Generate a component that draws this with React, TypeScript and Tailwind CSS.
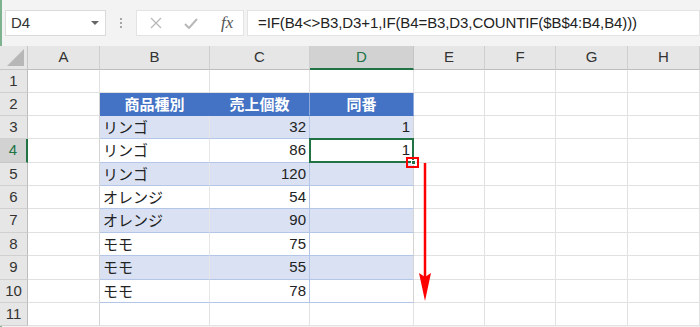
import React from "react";

const cols = ["A", "B", "C", "D", "E", "F", "G", "H"];
const colW = [72, 110, 100, 104, 71, 71, 72, 72];
const rowH = [23, 23, 23, 24, 23, 23, 24, 23, 24, 23, 23];

const data: Record<number, [string, string, string]> = {
  3: ["リンゴ", "32", "1"],
  4: ["リンゴ", "86", "1"],
  5: ["リンゴ", "120", ""],
  6: ["オレンジ", "54", ""],
  7: ["オレンジ", "90", ""],
  8: ["モモ", "75", ""],
  9: ["モモ", "55", ""],
  10: ["モモ", "78", ""],
};

const jp = { fontFamily: '"Noto Sans CJK JP", "Noto Sans", sans-serif' };
const lat = { fontFamily: '"Liberation Sans", Arial, sans-serif' };

export default function App() {
  const gridCols = `28px ${colW.map((w) => w + "px").join(" ")}`;
  const gridRows = `24px ${rowH.map((h) => h + "px").join(" ")}`;

  const cells: React.ReactNode[] = [];
  cells.push(
    <div key="corner" className="relative bg-[#e6e6e6] border-r border-b border-[#c6c6c6]">
      <div
        className="absolute right-[3px] bottom-[3px] w-0 h-0"
        style={{ borderLeft: "17px solid transparent", borderBottom: "17px solid #b7b7b7" }}
      />
    </div>
  );
  cols.forEach((c) => {
    const sel = c === "D";
    cells.push(
      <div
        key={"h" + c}
        className={
          "flex items-center justify-center text-[15px] border-r " +
          (sel
            ? "bg-[#d2d2d2] text-[#217346] border-[#c6c6c6] border-b-2 border-b-[#217346]"
            : "bg-[#e6e6e6] text-[#333] border-[#cfcfcf] border-b border-b-[#bdbdbd]")
        }
        style={lat}
      >
        {c}
      </div>
    );
  });

  for (let r = 1; r <= 11; r++) {
    const sel = r === 4;
    cells.push(
      <div
        key={"r" + r}
        className={
          "flex items-center justify-center text-[15px] border-b " +
          (sel
            ? "bg-[#d2d2d2] text-[#217346] border-[#c6c6c6] border-r-2 border-r-[#217346]"
            : "bg-[#e6e6e6] text-[#333] border-[#d0d0d0] border-r border-r-[#bdbdbd]")
        }
        style={lat}
      >
        {r}
      </div>
    );
    cols.forEach((c, ci) => {
      const inTable = ci >= 1 && ci <= 3 && r >= 2 && r <= 10;
      let cls = "flex items-center text-[15px] px-[3px] ";
      let content: React.ReactNode = null;
      let font: React.CSSProperties = lat;
      if (inTable) {
        if (r === 2) {
          cls += "bg-[#4472c4] text-white font-bold justify-center border-b border-[#4472c4] ";
          cls += ci >= 2 ? "border-r border-r-[#8eaadb] " : "border-r border-r-[#4472c4] ";
          content = ["商品種別", "売上個数", "同番"][ci - 1];
          font = jp;
        } else {
          const band = r % 2 === 1;
          cls += (band ? "bg-[#d9e1f2] " : "bg-white ") + "text-[#222] border-b border-[#b4c6e7] ";
          cls += ci === 2 ? "border-r border-r-[#b4c6e7] " : ci === 3 ? "border-r border-r-[#d4d4d4] " : "border-r border-r-[#e6e6e6] ";
          content = data[r][ci - 1];
          if (ci === 1) {
            font = jp;
            cls += "justify-start ";
          } else {
            cls += "justify-end ";
          }
        }
      } else {
        cls += "bg-white border-r border-b border-[#e1e1e1] ";
      }
      if (ci === 0 && r >= 2 && r <= 11) cls += "border-r-[#d4d4d4] ";
      cells.push(
        <div key={c + r} className={cls} style={font}>
          {content}
        </div>
      );
    });
  }

  return (
    <div className="w-[700px] h-[327px] overflow-hidden bg-[#f3f3f3] relative" style={lat}>
      <div className="absolute left-0 top-0 w-[2px] h-full bg-[#7fb38f]" />
      <div className="h-[46px] flex items-center pl-[5px]">
        <div className="w-[101px] h-[26px] bg-white border border-[#dadada] flex items-center justify-between pl-[5px] pr-[6px]">
          <span className="text-[15px] text-[#333]">D4</span>
          <span
            className="w-0 h-0"
            style={{ borderLeft: "4px solid transparent", borderRight: "4px solid transparent", borderTop: "4px solid #666" }}
          />
        </div>
        <div className="w-[30px] flex flex-col items-center gap-[2px]">
          <span className="w-[2px] h-[2px] bg-[#a6a6a6]" />
          <span className="w-[2px] h-[2px] bg-[#a6a6a6]" />
          <span className="w-[2px] h-[2px] bg-[#a6a6a6]" />
        </div>
        <div className="w-[108px] h-[26px] bg-white border border-[#e3e3e3] flex items-center">
          <svg width="12" height="12" viewBox="0 0 12 12" className="ml-[13px]">
            <path d="M1 1 L11 11 M11 1 L1 11" stroke="#b8b8b8" strokeWidth="1.3" />
          </svg>
          <svg width="14" height="11" viewBox="0 0 14 11" className="ml-[22px]">
            <path d="M1 6 L5 10 L13 1" stroke="#b8b8b8" strokeWidth="2" fill="none" />
          </svg>
          <span
            className="ml-[23px] text-[17px] italic text-[#555]"
            style={{ fontFamily: '"Liberation Serif", "Times New Roman", serif' }}
          >
            fx
          </span>
        </div>
        <div className="flex-1 ml-[3px] h-[26px] bg-white border border-[#e3e3e3] flex items-center pl-[10px] text-[15px] text-[#222] tracking-[-0.1px]">
          =IF(B4&lt;&gt;B3,D3+1,IF(B4=B3,D3,COUNTIF($B$4:B4,B4)))
        </div>
      </div>
      <div className="relative">
        <div className="grid" style={{ gridTemplateColumns: gridCols, gridTemplateRows: gridRows }}>
          {cells}
        </div>
        <div className="absolute left-[309px] top-[92px] w-[105px] h-[25px] border-2 border-[#217346] pointer-events-none" />
        <div className="absolute left-[411px] top-[114px] w-[5px] h-[5px] bg-[#217346] border border-white" />
        <div className="absolute left-[406px] top-[111px] w-[13px] h-[11px] border-2 border-[#ff0000]" />
        <svg className="absolute left-[418px] top-[117px]" width="14" height="140" viewBox="0 0 14 140">
          <line x1="7" y1="0" x2="7" y2="115" stroke="#ff0000" strokeWidth="2.5" />
          <path d="M1 110 L7 138 L13 110 L7 114 Z" fill="#ff0000" />
        </svg>
      </div>
    </div>
  );
}
